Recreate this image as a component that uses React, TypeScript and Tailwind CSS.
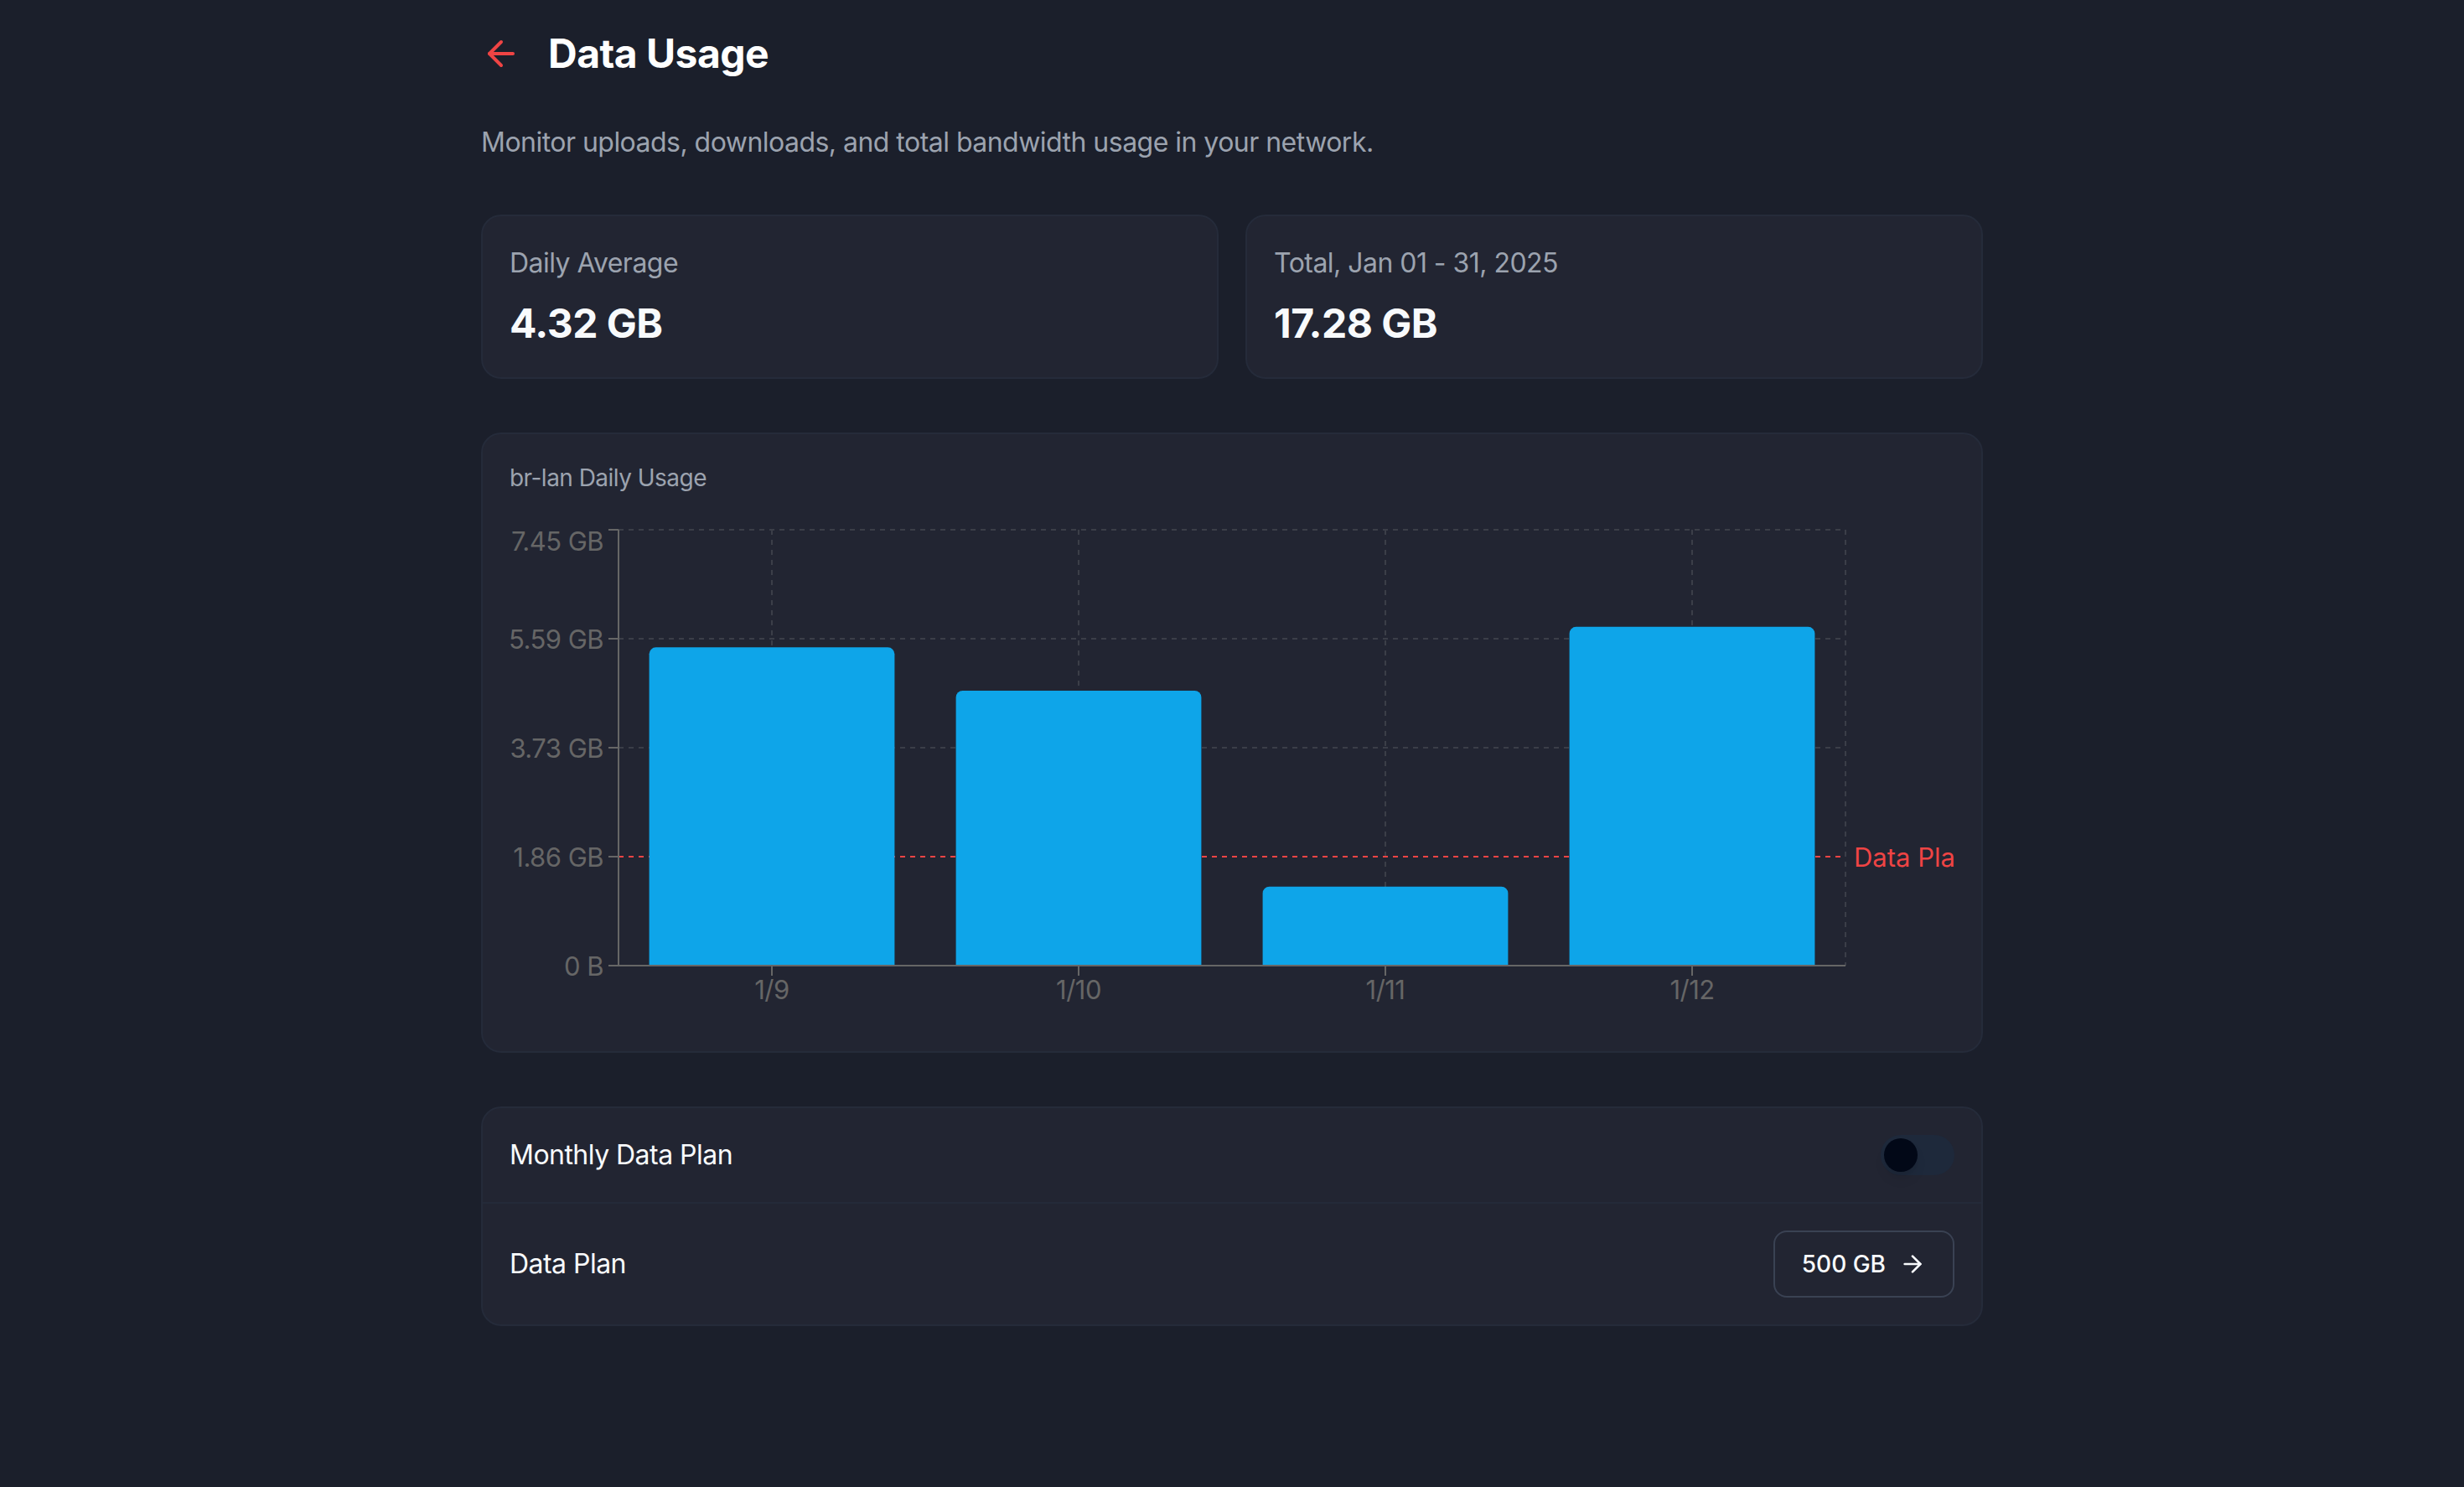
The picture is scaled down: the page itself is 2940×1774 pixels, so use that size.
import React, { useState } from 'react';
import { ArrowLeft, ArrowRight } from 'lucide-react';

const usage = [
  { label: '1/9', value: 5.44 },
  { label: '1/10', value: 4.7 },
  { label: '1/11', value: 1.35 },
  { label: '1/12', value: 5.79 },
];

const yTicks = [
  { label: '7.45 GB', y: 10, ly: 23 },
  { label: '5.59 GB', y: 140, ly: 140 },
  { label: '3.73 GB', y: 270, ly: 270 },
  { label: '1.86 GB', y: 400, ly: 400 },
  { label: '0 B', y: 530, ly: 530 },
];

const MAX = 7.45;
const LEFT = 130;
const RIGHT = 1594;
const TOP = 10;
const BOTTOM = 530;

const StatCard: React.FC<{ label: string; value: string }> = ({ label, value }) => (
  <div className="rounded-3xl border-2 border-[#252b3a] bg-[#222532] p-8">
    <p className="text-[32px] leading-[48px] text-[#9ca3af]">{label}</p>
    <p className="mt-4 text-[48px] leading-[64px] font-bold text-[#f8fafc]">{value}</p>
  </div>
);

const UsageChart: React.FC = () => {
  const band = (RIGHT - LEFT) / usage.length;
  const barW = band * 0.8;
  const yOf = (v: number) => BOTTOM - (v / MAX) * (BOTTOM - TOP);
  const r = 8;

  return (
    <svg viewBox="0 0 1724 600" className="block h-[600px] w-full" fontFamily="Inter, sans-serif">
      {/* grid */}
      {yTicks.slice(0, 3).map((t) => (
        <line key={t.label} x1={LEFT} x2={RIGHT} y1={t.y} y2={t.y} stroke="#3b3e48" strokeWidth={2} strokeDasharray="6 6" />
      ))}
      {usage.map((d, i) => {
        const cx = LEFT + band * i + band / 2;
        return <line key={d.label} x1={cx} x2={cx} y1={TOP} y2={BOTTOM} stroke="#3b3e48" strokeWidth={2} strokeDasharray="6 6" />;
      })}
      <line x1={RIGHT} x2={RIGHT} y1={TOP} y2={BOTTOM} stroke="#3b3e48" strokeWidth={2} strokeDasharray="6 6" />

      {/* data plan reference, label runs off the chart edge */}
      <line x1={LEFT} x2={RIGHT} y1={400} y2={400} stroke="#ef4444" strokeWidth={2} strokeDasharray="6 6" />
      <text x={1604} y={400} dominantBaseline="central" fontSize={31} letterSpacing="0" fill="#ef4444">
        Data Plan
      </text>

      {/* bars */}
      {usage.map((d, i) => {
        const x = LEFT + band * i + band * 0.1;
        const y = yOf(d.value);
        return (
          <path
            key={d.label}
            d={`M${x},${y + r} A${r},${r} 0 0 1 ${x + r},${y} L${x + barW - r},${y} A${r},${r} 0 0 1 ${x + barW},${y + r} L${x + barW},${BOTTOM} L${x},${BOTTOM} Z`}
            fill="#0ea5e9"
          />
        );
      })}

      {/* axes */}
      <line x1={LEFT} x2={LEFT} y1={TOP} y2={BOTTOM} stroke="#666" strokeWidth={2} />
      <line x1={LEFT - 12} x2={RIGHT} y1={BOTTOM} y2={BOTTOM} stroke="#666" strokeWidth={2} />
      {yTicks.map((t) => (
        <g key={t.label}>
          <line x1={LEFT - 12} x2={LEFT} y1={t.y} y2={t.y} stroke="#666" strokeWidth={2} />
          <text x={112} y={t.ly} textAnchor="end" dominantBaseline="central" fontSize={31} fill="#666">
            {t.label}
          </text>
        </g>
      ))}
      {usage.map((d, i) => {
        const cx = LEFT + band * i + band / 2;
        return (
          <g key={d.label}>
            <line x1={cx} x2={cx} y1={BOTTOM} y2={BOTTOM + 12} stroke="#666" strokeWidth={2} />
            <text x={cx} y={558} textAnchor="middle" dominantBaseline="central" fontSize={31} fill="#666">
              {d.label}
            </text>
          </g>
        );
      })}
    </svg>
  );
};

export default function App() {
  const [planOn, setPlanOn] = useState(false);

  return (
    <div className="min-h-screen bg-[#1b1f2b] font-['Inter',sans-serif] tracking-[-0.033em]">
      <div className="mx-auto max-w-[1792px] pt-8 pb-16">
        <div className="mb-[50px] flex h-16 items-center gap-8">
          <button className="text-[#ef4444]">
            <ArrowLeft size={48} strokeWidth={2} />
          </button>
          <h1 className="text-[48px] leading-[64px] font-bold text-white">Data Usage</h1>
        </div>

        <p className="mb-[62px] text-[32px] leading-[48px] text-[#9ca3af]">
          Monitor uploads, downloads, and total bandwidth usage in your network.
        </p>

        <div className="mb-16 grid grid-cols-2 gap-8">
          <StatCard label="Daily Average" value="4.32 GB" />
          <StatCard label="Total, Jan 01 - 31, 2025" value="17.28 GB" />
        </div>

        <div className="mb-16 rounded-3xl border-2 border-[#252b3a] bg-[#222532] p-8">
          <p className="mb-8 text-[28px] leading-[40px] text-[#9ca3af]">br-lan Daily Usage</p>
          <UsageChart />
        </div>

        <div className="rounded-3xl border-2 border-[#252b3a] bg-[#222532]">
          <div className="flex items-center justify-between border-b-2 border-[#242a39] px-8 py-8">
            <span className="text-[32px] leading-[48px] text-[#f8fafc]">Monthly Data Plan</span>
            <button
              onClick={() => setPlanOn(!planOn)}
              className={`flex h-12 w-[88px] items-center rounded-full px-1 ${planOn ? 'bg-[#0ea5e9]' : 'bg-[#1e293b]'}`}
            >
              <span
                className={`h-10 w-10 rounded-full bg-[#020817] shadow-lg transition-transform ${planOn ? 'translate-x-10' : 'translate-x-0'}`}
              />
            </button>
          </div>
          <div className="flex items-center justify-between px-8 py-8">
            <span className="text-[32px] leading-[48px] text-[#f8fafc]">Data Plan</span>
            <button className="flex h-20 items-center gap-4 rounded-2xl border-2 border-[#3a4253] px-8 text-[28px] font-medium tracking-normal text-[#f8fafc]">
              500 GB
              <ArrowRight size={32} strokeWidth={2} />
            </button>
          </div>
        </div>
      </div>
    </div>
  );
}
